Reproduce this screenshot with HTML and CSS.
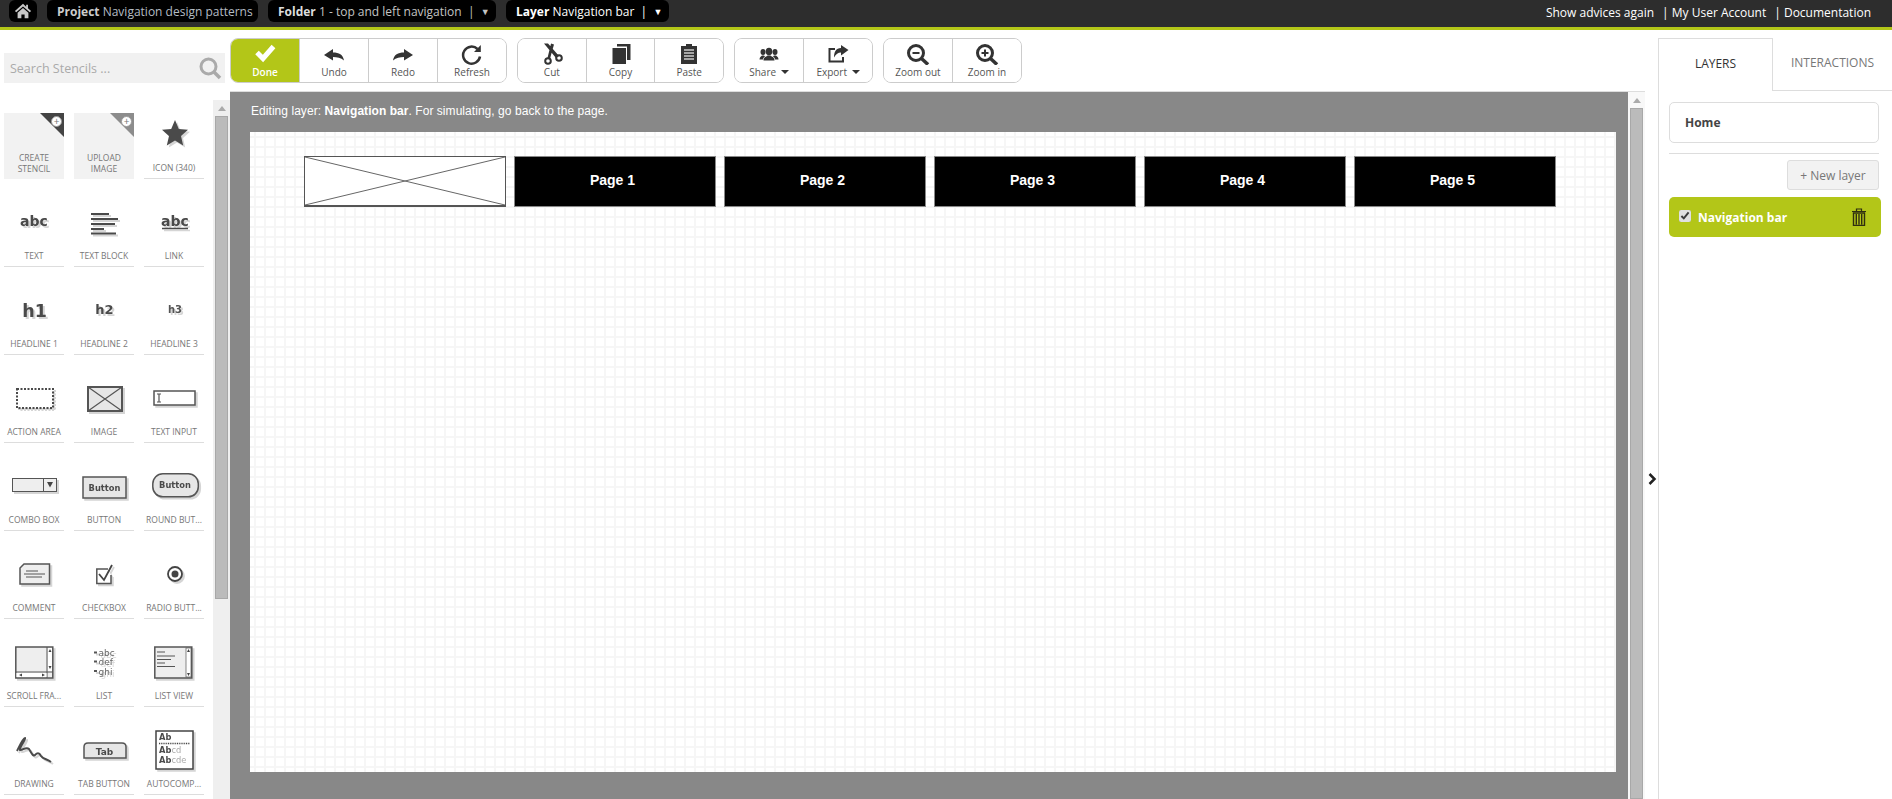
FILE: index.html
```html
<!DOCTYPE html>
<html lang="en">
<head>
<meta charset="utf-8">
<title>Navigation design patterns</title>
<link rel="stylesheet" href="styles.css">
</head>
<body>
<header class="topbar">
  <a class="pill pill-home"><svg width="18" height="18" viewBox="0 0 20 20"><path d="M10 2 L1 10 L2.500 11.500 L10 5 L17.500 11.500 L19 10 L15.500 7 V3 H13.500 V5.200 Z" fill="#c8c8c8"/><path d="M4 12 L10 6.800 L16 12 V18 H11.800 V14 H8.200 V18 H4 Z" fill="#c8c8c8"/></svg></a>
  <a class="pill pill-project"><b>Project</b> Navigation design patterns</a>
  <a class="pill pill-folder"><b>Folder</b> 1 - top and left navigation &nbsp;|&nbsp; <span class="tri">▼</span></a>
  <a class="pill pill-layer"><b>Layer</b> Navigation bar &nbsp;|&nbsp; <span class="tri">▼</span></a>
  <nav class="toplinks">
    <a>Show advices again</a>
    <a>| My User Account</a>
    <a>| Documentation</a>
  </nav>
</header>
<div class="accent"></div>
<main class="workspace">
  <aside class="stencils">
    <div class="search">
      <span>Search Stencils ...</span>
      <svg width="24" height="24" viewBox="0 0 24 24"><circle cx="10.500" cy="10.500" r="7.500" fill="none" stroke="#aaa" stroke-width="3"/><path d="M16 16 L22 22" stroke="#aaa" stroke-width="3.500"/></svg>
    </div>
    <div class="stencil-body">
      <div class="stencil-grid">
        <div class="stencil tile"><span class="corner corner-dark"></span><span class="corner-plus">+</span><div class="stencil-label">CREATE<br>STENCIL</div></div>
        <div class="stencil tile"><span class="corner corner-mid"></span><span class="corner-plus">+</span><div class="stencil-label">UPLOAD<br>IMAGE</div></div>
        <div class="stencil"><svg class="glyph" viewBox="0 0 60 49"><path d="M31 7 L34.800 16 L44 16.800 L37 23 L39.200 32.500 L31 27.500 L22.800 32.500 L25 23 L18 16.800 L27.200 16 Z" fill="#4a4a4a"/></svg><div class="stencil-label">ICON (340)</div></div>

        <div class="stencil"><svg class="glyph" viewBox="0 0 60 49"><text x="30" y="25" class="g-bold g14">abc</text></svg><div class="stencil-label">TEXT</div></div>
        <div class="stencil"><svg class="glyph" viewBox="0 0 60 49"><path d="M17 13 H35 M17 18 H44 M17 23 H41 M17 28 H30 M17 32.500 H42" stroke="#4a4a4a" stroke-width="2"/></svg><div class="stencil-label">TEXT BLOCK</div></div>
        <div class="stencil"><svg class="glyph" viewBox="0 0 60 49"><text x="31" y="25" class="g-bold g14">abc</text><path d="M18 27.500 H44" stroke="#4a4a4a" stroke-width="1.500"/></svg><div class="stencil-label">LINK</div></div>

        <div class="stencil"><svg class="glyph" viewBox="0 0 60 49"><text x="30.500" y="28" class="g-bold g17">h1</text></svg><div class="stencil-label">HEADLINE 1</div></div>
        <div class="stencil"><svg class="glyph" viewBox="0 0 60 49"><text x="30.500" y="25" class="g-bold g13">h2</text></svg><div class="stencil-label">HEADLINE 2</div></div>
        <div class="stencil"><svg class="glyph" viewBox="0 0 60 49"><text x="31" y="24" class="g-semi g10">h3</text></svg><div class="stencil-label">HEADLINE 3</div></div>

        <div class="stencil"><svg class="glyph" viewBox="0 0 60 49"><rect x="13" y="12" width="36" height="19" fill="#fff" stroke="#4a4a4a" stroke-width="2" stroke-dasharray="2 1.500"/></svg><div class="stencil-label">ACTION AREA</div></div>
        <div class="stencil"><svg class="glyph" viewBox="0 0 60 49"><rect x="14" y="10" width="34" height="24" fill="#e6e6e6" stroke="#555" stroke-width="2"/><path d="M14 10 L48 34 M48 10 L14 34" stroke="#555" stroke-width="1.200"/></svg><div class="stencil-label">IMAGE</div></div>
        <div class="stencil"><svg class="glyph" viewBox="0 0 60 49"><rect x="10" y="14" width="41" height="14" fill="#fff" stroke="#555" stroke-width="1.500"/><path d="M13 17 H17 M13 25 H17 M15 17 V25" stroke="#555" stroke-width="1.200"/></svg><div class="stencil-label">TEXT INPUT</div></div>

        <div class="stencil"><svg class="glyph" viewBox="0 0 60 49"><rect x="8.500" y="13.500" width="44" height="13" fill="#eee" stroke="#555"/><path d="M39.500 13.500 V26.500" stroke="#555"/><path d="M43 17 H49 L46 22.500 Z" fill="#444"/></svg><div class="stencil-label">COMBO BOX</div></div>
        <div class="stencil"><svg class="glyph" viewBox="0 0 60 49"><rect x="9" y="12" width="43" height="21" fill="#e6e6e6" stroke="#555" stroke-width="1.500"/><text x="30.500" y="26" class="g-bold g8">Button</text></svg><div class="stencil-label">BUTTON</div></div>
        <div class="stencil"><svg class="glyph" viewBox="0 0 60 49"><rect x="8.800" y="8.800" width="45.500" height="23" rx="10" fill="#e6e6e6" stroke="#555" stroke-width="1.500"/><text x="31" y="23" class="g-bold g8">Button</text></svg><div class="stencil-label">ROUND BUT...</div></div>

        <div class="stencil"><svg class="glyph" viewBox="0 0 60 49"><path d="M20 11 H45.500 V31 H16 V15 Z" fill="#eee" stroke="#555" stroke-width="1.500"/><path d="M22 18 H34 M20 21 H41 M22 24 H38" stroke="#555"/></svg><div class="stencil-label">COMMENT</div></div>
        <div class="stencil"><svg class="glyph" viewBox="0 0 60 49"><path d="M34 16 H22.800 V30.500 H37 V22" fill="#fff" stroke="#555" stroke-width="1.500"/><path d="M25 21 L30 27 L38 12" fill="none" stroke="#444" stroke-width="1.800"/></svg><div class="stencil-label">CHECKBOX</div></div>
        <div class="stencil"><svg class="glyph" viewBox="0 0 60 49"><circle cx="31" cy="21" r="7" fill="#fff" stroke="#444" stroke-width="1.800"/><circle cx="31" cy="21" r="3.500" fill="#444"/></svg><div class="stencil-label">RADIO BUTT...</div></div>

        <div class="stencil"><svg class="glyph" viewBox="0 0 60 49"><rect x="11.800" y="6" width="37" height="31" fill="#eee" stroke="#555" stroke-width="1.500"/><path d="M43 6 V37 M11.800 31 H48.800" stroke="#555"/><rect x="44" y="7" width="4" height="23" fill="#fff"/><rect x="12.500" y="32" width="30" height="4" fill="#fff"/><path d="M44.500 11 L46 8 L47.500 11 Z M44.500 25 L46 28 L47.500 25 Z M18 32.500 L15 34 L18 35.500 Z M38 32.500 L41 34 L38 35.500 Z" fill="#444"/></svg><div class="stencil-label">SCROLL FRA...</div></div>
        <div class="stencil"><svg class="glyph" viewBox="0 0 60 49"><path d="M20 11.500 H23 M20 20.500 H23 M20 30 H23" stroke="#555" stroke-width="2"/><text x="24.500" y="14.500" class="g-thin g9">abc</text><text x="24.500" y="24" class="g-thin g9">def</text><text x="24.500" y="33.500" class="g-thin g9">ghi</text></svg><div class="stencil-label">LIST</div></div>
        <div class="stencil"><svg class="glyph" viewBox="0 0 60 49"><rect x="10.800" y="6" width="37" height="31" fill="#eee" stroke="#555" stroke-width="1.500"/><rect x="42" y="7" width="5" height="29" fill="#fff" stroke="#555" stroke-width=".7"/><path d="M13 11 H21 M13 15 H31 M13 18.500 H27 M13 22 H21 M13 25.500 H31" stroke="#555"/><path d="M43 11 L44.500 8 L46 11 Z M43 32 L44.500 35 L46 32 Z" fill="#444"/></svg><div class="stencil-label">LIST VIEW</div></div>

        <div class="stencil"><svg class="glyph" viewBox="0 0 60 49"><path d="M13 22 C15 18 19 9 21 9 C22 11 15 18 16 21 C18 22 22 17 25 20 C27 23 29 28 31 26 C33 24 35 23 37 27 C39 30 43 30 47 33" fill="none" stroke="#4a4a4a" stroke-width="2"/></svg><div class="stencil-label">DRAWING</div></div>
        <div class="stencil"><svg class="glyph" viewBox="0 0 60 49"><path d="M10 29 V18 Q10 14 14 14 H48 Q52 14 52 18 V29 Z" fill="#e6e6e6" stroke="#555" stroke-width="1.500"/><text x="30.500" y="26" class="g-bold g9">Tab</text></svg><div class="stencil-label">TAB BUTTON</div></div>
        <div class="stencil"><svg class="glyph" viewBox="0 0 60 49"><rect x="12" y="2" width="37" height="38" fill="#fff" stroke="#444" stroke-width="1.500"/><text x="15" y="11" class="g-start g8">Ab</text><path d="M15 14.500 H46" stroke="#444" stroke-width="1.500" stroke-dasharray="1 .8"/><text x="15" y="24" class="g-start g8">Ab<tspan class="g-fade">cd</tspan></text><text x="15" y="34" class="g-start g8">Ab<tspan class="g-fade">cde</tspan></text></svg><div class="stencil-label">AUTOCOMP...</div></div>
      </div>
      <div class="scrollbar">
        <span class="sb-arrow"></span>
        <span class="sb-thumb sb-thumb-left"></span>
      </div>
    </div>
  </aside>

  <section class="center">
    <div class="toolbar">
      <div class="tool-group group-four">
        <button class="tool tool-done"><svg class="tool-icon" viewBox="0 0 24 24"><path d="M4 11.500 L10 17.500 L20.500 5.500" fill="none" stroke="#fff" stroke-width="5"/></svg><span>Done</span></button>
        <button class="tool"><svg class="tool-icon" viewBox="0 0 24 24"><path d="M2 14 L11 8 V11.500 C17 11.500 21 13.500 22 19.500 C19 16.500 15 16 11 16 V19.500 Z" fill="#333"/></svg><span>Undo</span></button>
        <button class="tool"><svg class="tool-icon" viewBox="0 0 24 24"><path d="M22 14 L13 8 V11.500 C7 11.500 3 13.500 2 19.500 C5 16.500 9 16 13 16 V19.500 Z" fill="#333"/></svg><span>Redo</span></button>
        <button class="tool"><svg class="tool-icon" viewBox="0 0 24 24"><path d="M17.500 8 A8.500 8.500 0 1 0 20 15.500" fill="none" stroke="#333" stroke-width="2.500"/><path d="M20.800 4 V11 H14 Z" fill="#333"/></svg><span>Refresh</span></button>
      </div>
      <div class="tool-group group-three">
        <button class="tool"><svg class="tool-icon" viewBox="0 0 24 24"><path d="M4 2.500 L8 2.500 L19 15 L16 17 Z M11 2.500 L14 3.500 L11 14 L10 18 L7.500 17 Z" fill="#333"/><circle cx="8" cy="20" r="2.800" fill="none" stroke="#333" stroke-width="2"/><circle cx="19" cy="17" r="2.800" fill="none" stroke="#333" stroke-width="2"/></svg><span>Cut</span></button>
        <button class="tool"><svg class="tool-icon" viewBox="0 0 24 24"><path d="M8 3 H21.500 V19 H18 V5.500 H8 Z" fill="#333"/><path d="M3.500 7 H17 V23 H3.500 Z" fill="#333"/></svg><span>Copy</span></button>
        <button class="tool"><svg class="tool-icon" viewBox="0 0 24 24"><path d="M4 5 H9 V3 H15 V5 H20 V23 H4 Z" fill="#333"/><path d="M7 9 H17 M7 12 H17 M7 15 H17 M7 18 H17" stroke="#ccc" stroke-width="1.500"/></svg><span>Paste</span></button>
      </div>
      <div class="tool-group group-two">
        <button class="tool"><svg class="tool-icon" viewBox="0 0 24 24"><ellipse cx="12" cy="10.500" rx="3.300" ry="3.800" fill="#333"/><ellipse cx="6" cy="11" rx="2.500" ry="3" fill="#333"/><ellipse cx="18" cy="11" rx="2.500" ry="3" fill="#333"/><path d="M6.500 19.500 C6.500 16 9 16 10.500 14.500 H13.500 C15 16 17.500 16 17.500 19.500 Z M2.500 18.500 C2.500 16 4 15.500 5 14.500 H7 L8 15.500 C6.500 16.500 6 17.500 6 18.500 Z M21.500 18.500 C21.500 16 20 15.500 19 14.500 H17 L16 15.500 C17.500 16.500 18 17.500 18 18.500 Z" fill="#333"/></svg><span>Share <i class="caret"></i></span></button>
        <button class="tool"><svg class="tool-icon" viewBox="0 0 24 24"><path d="M9 8 H3.500 V20.500 H17 V16" fill="none" stroke="#333" stroke-width="2"/><path d="M22.500 9 L15 4 V7 C10 7 8 11 8 16.500 C10 13 12 11.500 15 11.500 V14.500 Z" fill="#333"/></svg><span>Export <i class="caret"></i></span></button>
      </div>
      <div class="tool-group group-two">
        <button class="tool"><svg class="tool-icon" viewBox="0 0 24 24"><circle cx="10" cy="12" r="7.500" fill="none" stroke="#333" stroke-width="3"/><path d="M15.500 17.500 L22 23.500" stroke="#333" stroke-width="3.500"/><path d="M6.500 12 H13.500" stroke="#333" stroke-width="2"/></svg><span>Zoom out</span></button>
        <button class="tool"><svg class="tool-icon" viewBox="0 0 24 24"><circle cx="10" cy="12" r="7.500" fill="none" stroke="#333" stroke-width="3"/><path d="M15.500 17.500 L22 23.500" stroke="#333" stroke-width="3.500"/><path d="M6.500 12 H13.500 M10 8.500 V15.500" stroke="#333" stroke-width="2"/></svg><span>Zoom in</span></button>
      </div>
    </div>
    <div class="stage">
      <div class="canvas">
        <p class="canvas-note">Editing layer: <b>Navigation bar</b>. For simulating, go back to the page.</p>
        <div class="page">
          <svg class="nav-image" viewBox="0 0 100 100" preserveAspectRatio="none"><path d="M0 0 L100 100 M100 0 L0 100" stroke="#666" stroke-width="1" vector-effect="non-scaling-stroke"/></svg>
          <div class="nav-item">Page 1</div>
          <div class="nav-item">Page 2</div>
          <div class="nav-item">Page 3</div>
          <div class="nav-item">Page 4</div>
          <div class="nav-item">Page 5</div>
        </div>
      </div>
      <div class="scrollbar scrollbar-stage">
        <span class="sb-arrow"></span>
        <span class="sb-thumb"></span>
      </div>
      <div class="collapse"><svg width="9" height="12" viewBox="0 0 9 12"><path d="M1.500 1 L6.500 6 L1.500 11" fill="none" stroke="#222" stroke-width="2.500"/></svg></div>
    </div>
  </section>

  <aside class="side">
    <div class="tabs">
      <div class="tab tab-active">LAYERS</div>
      <div class="tab">INTERACTIONS</div>
    </div>
    <div class="side-body">
      <div class="page-card">Home</div>
      <hr class="divider">
      <div class="new-row"><button class="new-layer">+ New layer</button></div>
      <div class="layer-row">
        <input class="layer-check" type="checkbox" checked>
        <span class="layer-name">Navigation bar</span>
        <svg class="layer-trash" width="14" height="18" viewBox="0 0 14 18"><path d="M4.500 3 V1 H9.500 V3 M0 3.500 H14" fill="none" stroke="#2f2f10" stroke-width="1.200"/><path d="M1.500 5 H12.500 V17.500 H1.500 Z M4.300 6 V16.500 M7 6 V16.500 M9.700 6 V16.500" fill="none" stroke="#2f2f10" stroke-width="1.400"/></svg>
      </div>
    </div>
  </aside>
</main>
</body>
</html>
```
FILE: styles.css
```css
* { box-sizing: border-box; }
html, body { height: 100%; }
body {
  margin: 0;
  overflow: hidden;
  display: flex;
  flex-direction: column;
  background: #fff;
  color: #444;
  font-family: "Open Sans", sans-serif;
}

.topbar {
  height: 27px;
  flex: none;
  display: flex;
  gap: 10px;
  padding-left: 9px;
  background: #2d2d2d;
}
.pill {
  height: 22px;
  display: flex;
  align-items: center;
  white-space: pre;
  background: #000;
  border-radius: 6px;
  font-size: 12px;
  color: #b4bcc4;
}
.pill b { font-weight: 700; color: #ccc; }
.pill-home { width: 28px; justify-content: center; }
.pill-project { width: 211px; padding-left: 10px; }
.pill-folder { width: 228px; padding-left: 10px; color: #c4c4c4; }
.pill-folder b { color: #ddd; }
.pill-layer { width: 163px; padding-left: 10px; color: #fff; }
.pill-layer b { color: #fff; }
.tri { font-size: 9px; }
.toplinks {
  margin-left: auto;
  padding-right: 21px;
  display: flex;
  gap: 8px;
  align-items: center;
  height: 24px;
  font-size: 12px;
  color: #fff;
}
.accent { height: 3px; flex: none; background: #b3c618; }

.workspace { flex: 1; min-height: 0; display: flex; }

.stencils { width: 230px; flex: none; display: flex; flex-direction: column; padding-top: 23px; }
.search {
  width: 221px;
  height: 30px;
  margin-left: 4px;
  flex: none;
  padding: 0 3px 0 6px;
  display: flex;
  align-items: center;
  justify-content: space-between;
  background: #f1f1f1;
  font-size: 12.500px;
  color: #aaa;
}
.stencil-body { flex: 1; min-height: 0; display: flex; margin-top: 17px; }
.stencil-grid {
  width: 213px;
  padding: 13px 0 0 4px;
  display: grid;
  grid-template-columns: repeat(3, 60px);
  grid-auto-rows: 66px;
  column-gap: 10px;
  row-gap: 22px;
  overflow: hidden;
}
.stencil {
  position: relative;
  display: flex;
  flex-direction: column;
  justify-content: flex-end;
  border-bottom: 1px solid #ddd;
  text-align: center;
}
.glyph {
  display: block;
  width: 60px;
  height: 49px;
  flex: none;
  overflow: visible;
  filter: drop-shadow(2px 2px 0 #d5d5d5);
}
.stencil-label {
  height: 16px;
  flex: none;
  font-size: 8.500px;
  line-height: 11px;
  white-space: nowrap;
  color: #777;
}
.tile { background: #f2f2f2; border-bottom: 0; }
.tile .stencil-label { height: 27px; }
.corner {
  position: absolute;
  top: 0;
  right: 0;
  width: 24px;
  height: 24px;
  clip-path: polygon(0 0, 100% 0, 100% 100%);
}
.corner-dark { background: #444; }
.corner-mid { background: #8c8c8c; }
.corner-plus {
  position: absolute;
  top: 3px;
  right: 2px;
  width: 11px;
  height: 11px;
  border-radius: 50%;
  background: #fff;
  border: 1px solid #999;
  font-size: 10px;
  line-height: 8px;
  text-align: center;
  color: #777;
}
.g-bold, .g-semi, .g-thin, .g-start {
  font-family: "DejaVu Sans", sans-serif;
  fill: #4a4a4a;
}
.g-bold { font-weight: 700; text-anchor: middle; }
.g-semi { font-weight: 700; text-anchor: middle; fill: #555; }
.g-thin { font-weight: 400; fill: #666; }
.g-start { font-weight: 700; }
.g-fade { fill: #aaa; font-weight: 400; }
.g8 { font-size: 8.300px; }
.g9 { font-size: 9px; }
.g10 { font-size: 10px; }
.g13 { font-size: 13px; }
.g14 { font-size: 14px; }
.g17 { font-size: 17.500px; }

.scrollbar {
  width: 17px;
  flex: none;
  display: flex;
  flex-direction: column;
  align-items: center;
  background: #efefef;
}
.sb-arrow {
  flex: none;
  width: 0;
  height: 0;
  margin: 6px 0 5px;
  border-left: 4px solid transparent;
  border-right: 4px solid transparent;
  border-bottom: 5px solid #aaa;
}
.sb-thumb {
  flex: 1;
  width: 13px;
  background: #bbb;
  border: 1px solid #a8a8a8;
}
.sb-thumb-left { flex: none; height: 483px; }
.scrollbar-stage { background: #f8f8f8; }

.center { width: 1428px; flex: none; display: flex; flex-direction: column; }
.toolbar {
  height: 62px;
  flex: none;
  display: flex;
  gap: 10px;
  padding-top: 8px;
  border-bottom: 1px solid #ddd;
  margin-right: 13px;
}
.tool-group {
  display: flex;
  height: 45px;
  border: 1px solid #ccc;
  border-radius: 8px;
  overflow: hidden;
}
.group-four { width: 277px; }
.group-three { width: 207px; }
.group-two { width: 139px; }
.tool {
  flex: 1;
  min-width: 0;
  height: 100%;
  padding: 2px 0 0;
  display: flex;
  flex-direction: column;
  align-items: center;
  background: #fff;
  border: 0;
  border-left: 1px solid #ccc;
  font-family: inherit;
  font-size: 10px;
  line-height: 14px;
  color: #555;
}
.tool:first-child { border-left: 0; }
.tool-done { background: #b3c618; color: #fff; font-weight: 600; }
.tool-icon { width: 24px; height: 24px; flex: none; }
.caret {
  display: inline-block;
  width: 0;
  height: 0;
  margin-left: 2px;
  vertical-align: 2px;
  border-left: 4px solid transparent;
  border-right: 4px solid transparent;
  border-top: 4px solid #333;
}

.stage { flex: 1; min-height: 0; display: flex; }
.canvas { width: 1398px; flex: none; background: #888; padding: 0 12px 0 20px; overflow: hidden; }
.canvas-note {
  margin: 0;
  height: 40px;
  padding: 12px 0 0 1px;
  font-family: "Liberation Sans", Arial, sans-serif;
  font-size: 12px;
  line-height: 15px;
  letter-spacing: .05px;
  color: #fff;
}
.page {
  width: 1366px;
  height: 640px;
  padding: 24px 0 0 54px;
  display: flex;
  align-items: flex-start;
  gap: 8px;
  background-color: #fff;
  background-image:
    linear-gradient(to right, #f6f6f6 2px, transparent 2px),
    linear-gradient(to bottom, #f6f6f6 2px, transparent 2px);
  background-size: 10px 10px;
  background-position: 4px 4px;
}
.nav-image { width: 202px; height: 51px; background: #fff; border: 1px solid #555; border-bottom-width: 2px; }
.nav-item {
  width: 202px;
  height: 51px;
  padding: 0 5px 4px 0;
  display: flex;
  align-items: center;
  justify-content: center;
  background: #000;
  border: 1px solid #888;
  font-family: "Liberation Sans", Arial, sans-serif;
  font-size: 14px;
  font-weight: 700;
  color: #fff;
}
.collapse { width: 13px; flex: none; padding: 66px 0 0 3px; display: flex; align-items: center; }

.side { flex: 1; min-width: 0; padding-top: 8px; display: flex; flex-direction: column; }
.tabs { display: flex; height: 53px; flex: none; }
.tab {
  flex: 1;
  padding-bottom: 3px;
  display: flex;
  align-items: center;
  justify-content: center;
  border-bottom: 1px solid #ddd;
  font-size: 12px;
  color: #777;
}
.tab-active {
  flex: none;
  width: 115px;
  border: 1px solid #ddd;
  border-bottom: 0;
  color: #333;
}
.side-body { flex: 1; padding: 11px 11px 0 10px; border-left: 1px solid #ddd; }
.page-card {
  width: 210px;
  height: 41px;
  padding: 0 0 1px 15px;
  display: flex;
  align-items: center;
  border: 1px solid #ddd;
  border-radius: 5px;
  font-size: 12px;
  font-weight: 700;
  color: #444;
}
.divider { width: 210px; margin: 10px 0 6px; border: 0; border-top: 1px solid #ddd; }
.new-row { width: 210px; display: flex; justify-content: flex-end; }
.new-layer {
  width: 92px;
  height: 30px;
  padding: 0;
  background: #f2f2f2;
  border: 1px solid #ddd;
  border-radius: 3px;
  font-family: inherit;
  font-size: 12px;
  color: #777;
}
.layer-row {
  width: 212px;
  height: 40px;
  margin-top: 7px;
  padding: 0 15px 0 10px;
  display: flex;
  align-items: center;
  background: #b3c618;
  border-radius: 5px;
}
.layer-check { width: 12px; height: 12px; margin: 0 7px 2px 0; accent-color: #e0e0e0; }
.layer-name { font-size: 12px; font-weight: 700; color: #fff; }
.layer-trash { margin-left: auto; }
```
